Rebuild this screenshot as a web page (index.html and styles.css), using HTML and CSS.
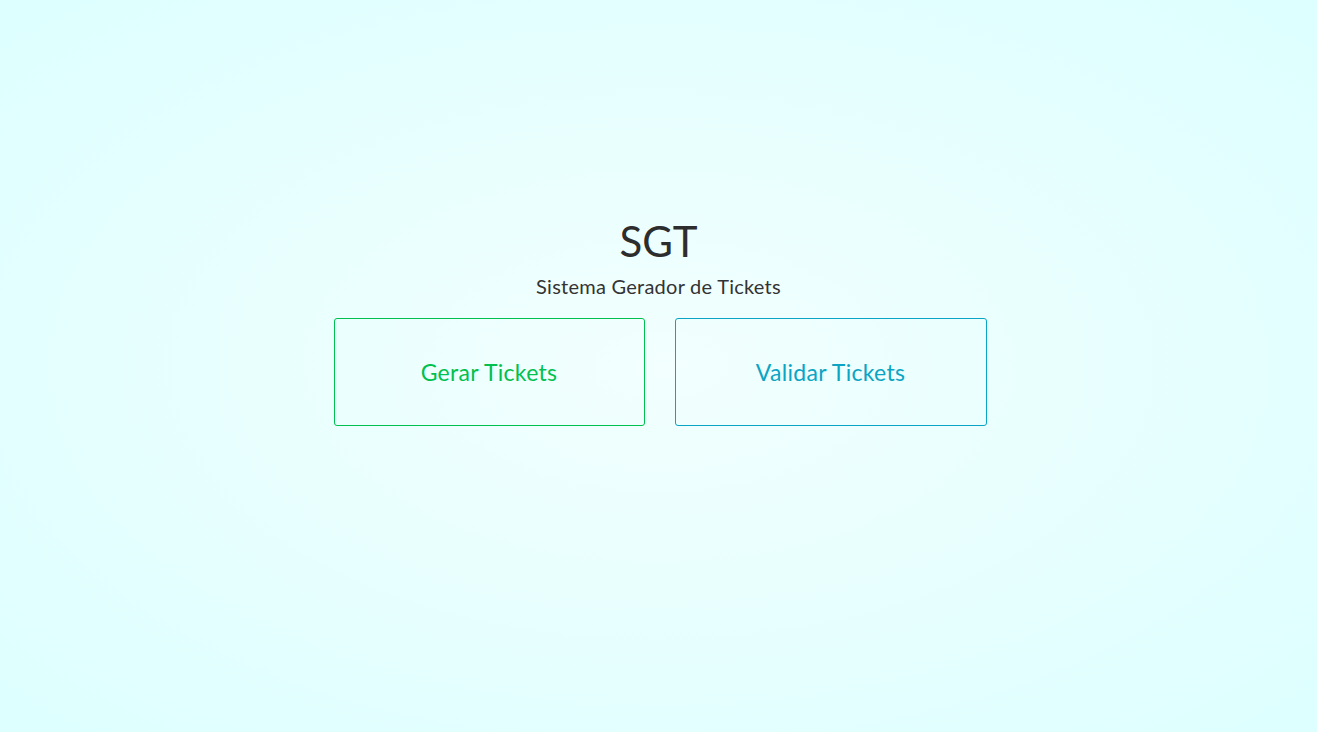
FILE: index.html
```html
<!DOCTYPE html>
<html lang="pt-BR">
<head>
<meta charset="utf-8">
<title>SGT</title>
<link rel="stylesheet" href="styles.css">
</head>
<body>
<main class="page">
  <section class="hero">
    <h1 class="title">SGT</h1>
    <p class="subtitle">Sistema Gerador de Tickets</p>
    <div class="actions">
      <a class="card card-green" href="#">Gerar Tickets</a>
      <a class="card card-blue" href="#">Validar Tickets</a>
    </div>
  </section>
</main>
</body>
</html>
```

FILE: styles.css
```css
* { box-sizing: border-box; }
html, body { margin: 0; height: 100%; }
body {
  font-family: "Lato", "Open Sans", sans-serif;
  background: radial-gradient(ellipse at 50% 50%, #f2fffe 0%, #e9fffe 40%, #ddffff 100%);
  color: #333;
}
.page {
  min-height: 100vh;
  display: flex;
  justify-content: center;
  padding-top: 217px;
}
.hero {
  display: flex;
  flex-direction: column;
  align-items: center;
}
.title {
  margin: 0;
  font-size: 42px;
  font-weight: 400;
  line-height: 48px;
  color: #2d2d2d;
}
.subtitle {
  margin: 9px 0 0;
  font-size: 20px;
  letter-spacing: 0.25px;
  line-height: 24px;
  color: #333;
}
.actions {
  margin-top: 20px;
  display: flex;
  gap: 30px;
  padding-left: 3px;
}
.card {
  width: 311px;
  height: 108px;
  display: flex;
  align-items: center;
  justify-content: center;
  border-radius: 3px;
  text-decoration: none;
  font-size: 23px;
  letter-spacing: 0.3px;
  background: transparent;
}
.card-green {
  border: 1px solid #00c04f;
  color: #00c04f;
}
.card-blue {
  border: 1px solid #0aa4c4;
  color: #0aa4c4;
  width: 312px;
}
```
